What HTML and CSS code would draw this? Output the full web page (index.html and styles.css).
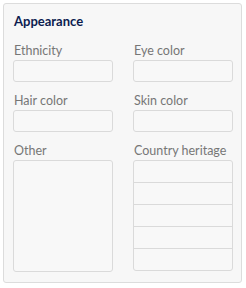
FILE: index.html
```html
<!DOCTYPE html>
<html>
<head>
<meta charset="utf-8">
<link rel="stylesheet" href="styles.css">
</head>
<body>
<section class="panel">
  <h2 class="title">Appearance</h2>
  <div class="grid">
    <div class="field">
      <label class="label">Ethnicity</label>
      <div class="input"></div>
    </div>
    <div class="field">
      <label class="label">Eye color</label>
      <div class="input"></div>
    </div>
    <div class="field">
      <label class="label">Hair color</label>
      <div class="input"></div>
    </div>
    <div class="field">
      <label class="label">Skin color</label>
      <div class="input"></div>
    </div>
    <div class="field">
      <label class="label">Other</label>
      <div class="textarea"></div>
    </div>
    <div class="field">
      <label class="label">Country heritage</label>
      <div class="list">
        <div class="row"></div>
        <div class="row"></div>
        <div class="row"></div>
        <div class="row"></div>
        <div class="row"></div>
      </div>
    </div>
  </div>
</section>
</body>
</html>
```
FILE: styles.css
```css
html, body {
  margin: 0;
  padding: 0;
  background: #ffffff;
}
body {
  font-family: Lato, "Open Sans", "Liberation Sans", sans-serif;
}
.panel {
  box-sizing: border-box;
  margin: 3px 0 0 3px;
  width: 239px;
  height: 280px;
  border: 1px solid #dcdcdc;
  border-radius: 3px;
  background: #f7f7f7;
  padding: 8px 8px 9px 9px;
}
.title {
  margin: 0 0 13px 1px;
  font-size: 13px;
  line-height: 18px;
  font-weight: 700;
  color: #0c1c4f;
}
.grid {
  display: grid;
  grid-template-columns: 100px 100px;
  column-gap: 20px;
  row-gap: 11px;
}
.field {
  display: flex;
  flex-direction: column;
}
.label {
  font-size: 12.5px;
  line-height: 16px;
  color: #767676;
  margin: 0 0 1px 1px;
}
.input,
.textarea,
.list {
  box-sizing: border-box;
  border: 1px solid #dadada;
  border-radius: 3px;
  background: #f8f8f8;
}
.input {
  height: 22px;
}
.textarea {
  height: 112px;
}
.list {
  height: 111px;
  display: flex;
  flex-direction: column;
}
.row {
  height: 21px;
}
.row + .row {
  border-top: 1px solid #dadada;
}
```
